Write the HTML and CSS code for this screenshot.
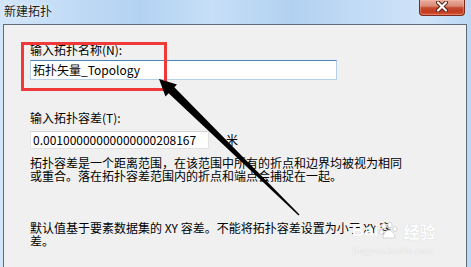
FILE: index.html
```html
<!DOCTYPE html>
<html lang="zh-CN">
<head>
    <meta charset="UTF-8">
    <meta name="viewport" content="width=device-width, initial-scale=1.0">
    <title>新建拓扑</title>
    <link rel="stylesheet" href="styles.css">
</head>
<body>
    <div class="window">
        <div class="titlebar">
            <span class="title">新建拓扑</span>
            <div class="close">
                <svg width="12" height="11" viewBox="0 0 12 11">
                    <path d="M2 1.5 L10 9.5 M10 1.5 L2 9.5" stroke="#5a1a10" stroke-width="4" stroke-linecap="round"/>
                    <path d="M2 1.5 L10 9.5 M10 1.5 L2 9.5" stroke="#fff" stroke-width="2.2" stroke-linecap="round"/>
                </svg>
            </div>
        </div>

        <div class="frame">
            <div class="content">
                <label class="label label-name">输入拓扑名称(N):</label>
                <div class="field wide">拓扑矢量_Topology</div>

                <label class="label label-tol">输入拓扑容差(T):</label>
                <div class="tol-row">
                    <div class="field short">0.00100000000000000208167</div>
                    <span class="unit">米</span>
                </div>

                <p class="note">拓扑容差是一个距离范围，在该范围中所有的折点和边界均被视为相同<br>或重合。落在拓扑容差范围内的折点和端点会捕捉在一起。</p>

                <p class="note note-default">默认值基于要素数据集的 XY 容差。不能将拓扑容差设置为小于 XY 容<br>差。</p>
            </div>
        </div>

        <!-- annotation overlay -->
        <div class="highlight"></div>
        <svg class="arrow" width="471" height="267" viewBox="0 0 471 267">
            <polygon points="159,79 177,84.5 165.5,96.5" fill="#000"/>
            <polygon points="166.8,91.6 298.5,215.5 299.5,214.5 172.6,85.6" fill="#000"/>
        </svg>

        <div class="watermark">
            <div class="wm-logo">
                <span class="wm-bai">Bai</span>
                <svg class="wm-paw" width="20" height="18" viewBox="0 0 20 18">
                    <ellipse cx="5" cy="4" rx="2.2" ry="2.8" fill="#fff" stroke="#d4d4d4"/>
                    <ellipse cx="11" cy="3" rx="2.2" ry="2.8" fill="#fff" stroke="#d4d4d4"/>
                    <ellipse cx="16" cy="7" rx="2" ry="2.5" fill="#fff" stroke="#d4d4d4"/>
                    <ellipse cx="2.5" cy="10" rx="2" ry="2.5" fill="#fff" stroke="#d4d4d4"/>
                    <path d="M4 16 C4 11 8 8 10 8 C12 8 16 11 16 16 Z" fill="#fff" stroke="#d4d4d4"/>
                </svg>
                <span class="wm-jy">经验</span>
            </div>
            <div class="wm-url">jingyan.baidu.com</div>
        </div>
    </div>
</body>
</html>
```

FILE: styles.css
```css
body {
    margin: 0;
    width: 471px;
    height: 267px;
    overflow: hidden;
    font-family: "Noto Sans CJK SC", sans-serif;
}
.window {
    position: relative;
    height: 267px;
    background: linear-gradient(90deg, #d3e6f9 0%, #c5ddf6 12%, #b3d2f2 30%, #c7dff7 45%, #b2d1f1 62%, #c4dcf5 78%, #cfe3f8 90%, #bcd7f3 100%);
}
.titlebar {
    height: 24px;
    display: flex;
    justify-content: space-between;
    align-items: flex-start;
}
.title {
    margin: 4px 0 0 4px;
    font-size: 12px;
    line-height: 14px;
    color: #1a1a1a;
    text-shadow: 0 0 5px #eaf3fd, 0 0 2px #eaf3fd;
}
.close {
    width: 46px;
    height: 16px;
    margin-right: 6px;
    box-sizing: border-box;
    border: 1px solid #7a2a1c;
    border-top: none;
    border-radius: 0 0 4px 4px;
    background: linear-gradient(#e9ab9c 0%, #d98a77 40%, #c54a30 52%, #c23a1f 78%, #d9583c 100%);
    box-shadow: inset 0 0 0 1px rgba(255, 200, 180, 0.35);
    display: flex;
    justify-content: center;
    padding-top: 1px;
}
.frame {
    padding: 0 4px 0 3px;
}
.content {
    height: 243px;
    box-sizing: border-box;
    border: 1px solid #5f6b7a;
    border-bottom: none;
    background: #f0f0f0;
    padding: 18px 0 0 26px;
    color: #000;
}
.label {
    display: block;
    font-size: 12px;
    line-height: 14px;
}
.label-name {
    margin-bottom: 3px;
}
.label-tol {
    margin-top: 31px;
    margin-bottom: 6px;
}
.field {
    box-sizing: border-box;
    background: #fff;
    font-size: 12px;
    padding: 0 2px;
    white-space: nowrap;
}
.field.wide {
    width: 307px;
    height: 20px;
    line-height: 18px;
    border: 1px solid #b6d0e8;
    border-top-color: #4a84bd;
}
.field.short {
    width: 179px;
    height: 18px;
    line-height: 16px;
    border: 1px solid #e2e2e2;
    border-top-color: #d4d4d4;
}
.tol-row {
    display: flex;
    align-items: center;
}
.unit {
    margin-left: 17px;
    font-size: 12px;
    line-height: 14px;
}
.note {
    margin: 7px 0 0;
    font-size: 12px;
    line-height: 13px;
}
.note-default {
    margin-top: 39px;
}
.highlight {
    position: absolute;
    left: 21px;
    top: 42px;
    width: 146px;
    height: 49px;
    box-sizing: border-box;
    border: 3px solid #f03a3a;
}
.arrow {
    position: absolute;
    left: 0;
    top: 0;
    pointer-events: none;
}
.watermark {
    position: absolute;
    left: 352px;
    top: 222px;
    color: #fff;
    text-shadow: 0 0 1px #c8c8c8;
}
.wm-logo {
    display: flex;
    align-items: center;
    gap: 1px;
}
.wm-bai {
    font-family: "Liberation Sans", sans-serif;
    font-weight: bold;
    font-size: 17px;
    line-height: 18px;
}
.wm-jy {
    margin-left: 3px;
    font-size: 16px;
    line-height: 18px;
    font-weight: bold;
}
.wm-url {
    font-family: "Liberation Serif", serif;
    font-size: 11px;
    line-height: 12px;
    margin-top: 4px;
    color: #f6f6f6;
}
```
